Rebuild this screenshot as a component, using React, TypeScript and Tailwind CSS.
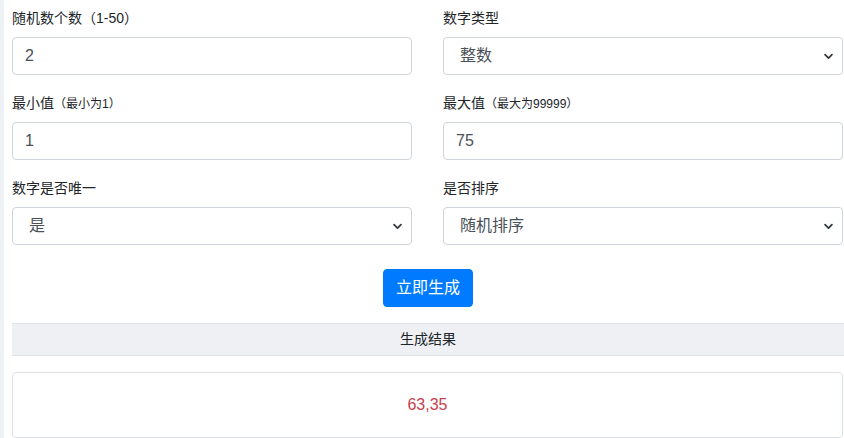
import React, { useState } from "react";

const font = "font-['Liberation_Sans','Noto_Sans_CJK_SC',sans-serif]";

const Chevron = () => (
  <svg
    className="pointer-events-none absolute right-[9px] top-1/2 -translate-y-1/2"
    width="11"
    height="11"
    viewBox="0 0 16 16"
  >
    <path
      d="M3 6l5 5 5-5"
      fill="none"
      stroke="#343a40"
      strokeWidth="2.6"
      strokeLinecap="round"
      strokeLinejoin="round"
    />
  </svg>
);

interface FieldProps {
  label: React.ReactNode;
  children: React.ReactNode;
}

const Field = ({ label, children }: FieldProps) => (
  <div className="mb-[18px]">
    <label className="mb-[8px] block h-[21px] text-[14px] leading-[21px] text-[#212529]">
      {label}
    </label>
    {children}
  </div>
);

const inputCls =
  "block h-[38px] w-full rounded-[4px] border border-[#ced4da] bg-white px-[12px] text-[16px] text-[#495057] outline-none";

const selectCls =
  "block h-[38px] w-full appearance-none rounded-[4px] border border-[#ced4da] bg-white pl-[16px] pr-[30px] text-[16px] text-[#495057] outline-none";

export default function App() {
  const [count, setCount] = useState("2");
  const [min, setMin] = useState("1");
  const [max, setMax] = useState("75");
  const [type, setType] = useState("int");
  const [unique, setUnique] = useState("yes");
  const [order, setOrder] = useState("random");

  return (
    <div className={`flex min-h-[438px] w-[844px] overflow-hidden bg-white ${font}`}>
      <div className="w-[4px] shrink-0 bg-[#eef1f5]" />
      <div className="w-[840px] shrink-0 pl-[8px] pt-[8px]">
        <div className="grid grid-cols-[400px_400px] gap-x-[31px]">
          <Field label="随机数个数（1-50）">
            <input
              className={inputCls}
              value={count}
              onChange={(e) => setCount(e.target.value)}
            />
          </Field>
          <Field label="数字类型">
            <div className="relative">
              <select
                className={selectCls}
                value={type}
                onChange={(e) => setType(e.target.value)}
              >
                <option value="int">整数</option>
                <option value="float">小数</option>
              </select>
              <Chevron />
            </div>
          </Field>
          <Field
            label={
              <>
                最小值<span className="text-[12px]">（最小为1）</span>
              </>
            }
          >
            <input
              className={inputCls}
              value={min}
              onChange={(e) => setMin(e.target.value)}
            />
          </Field>
          <Field
            label={
              <>
                最大值<span className="text-[12px]">（最大为99999）</span>
              </>
            }
          >
            <input
              className={inputCls}
              value={max}
              onChange={(e) => setMax(e.target.value)}
            />
          </Field>
          <Field label="数字是否唯一">
            <div className="relative">
              <select
                className={selectCls}
                value={unique}
                onChange={(e) => setUnique(e.target.value)}
              >
                <option value="yes">是</option>
                <option value="no">否</option>
              </select>
              <Chevron />
            </div>
          </Field>
          <Field label="是否排序">
            <div className="relative">
              <select
                className={selectCls}
                value={order}
                onChange={(e) => setOrder(e.target.value)}
              >
                <option value="random">随机排序</option>
                <option value="asc">从小到大</option>
                <option value="desc">从大到小</option>
              </select>
              <Chevron />
            </div>
          </Field>
        </div>

        <div className="mt-[6px] flex justify-center">
          <button className="h-[38px] rounded-[4px] border border-[#007bff] bg-[#007bff] px-[12px] text-[16px] leading-[24px] text-white">
            立即生成
          </button>
        </div>

        <div className="mt-[16px] flex h-[33px] items-center justify-center border-y border-[#dee2e6] bg-[#eef0f3] text-[14px] text-[#212529]">
          生成结果
        </div>

        <div className="mt-[16px] mr-[1px] flex h-[66px] items-center justify-center rounded-[4px] border border-[#dee2e6] text-[16px] text-[#c9404e]">
          63,35
        </div>
      </div>
    </div>
  );
}
